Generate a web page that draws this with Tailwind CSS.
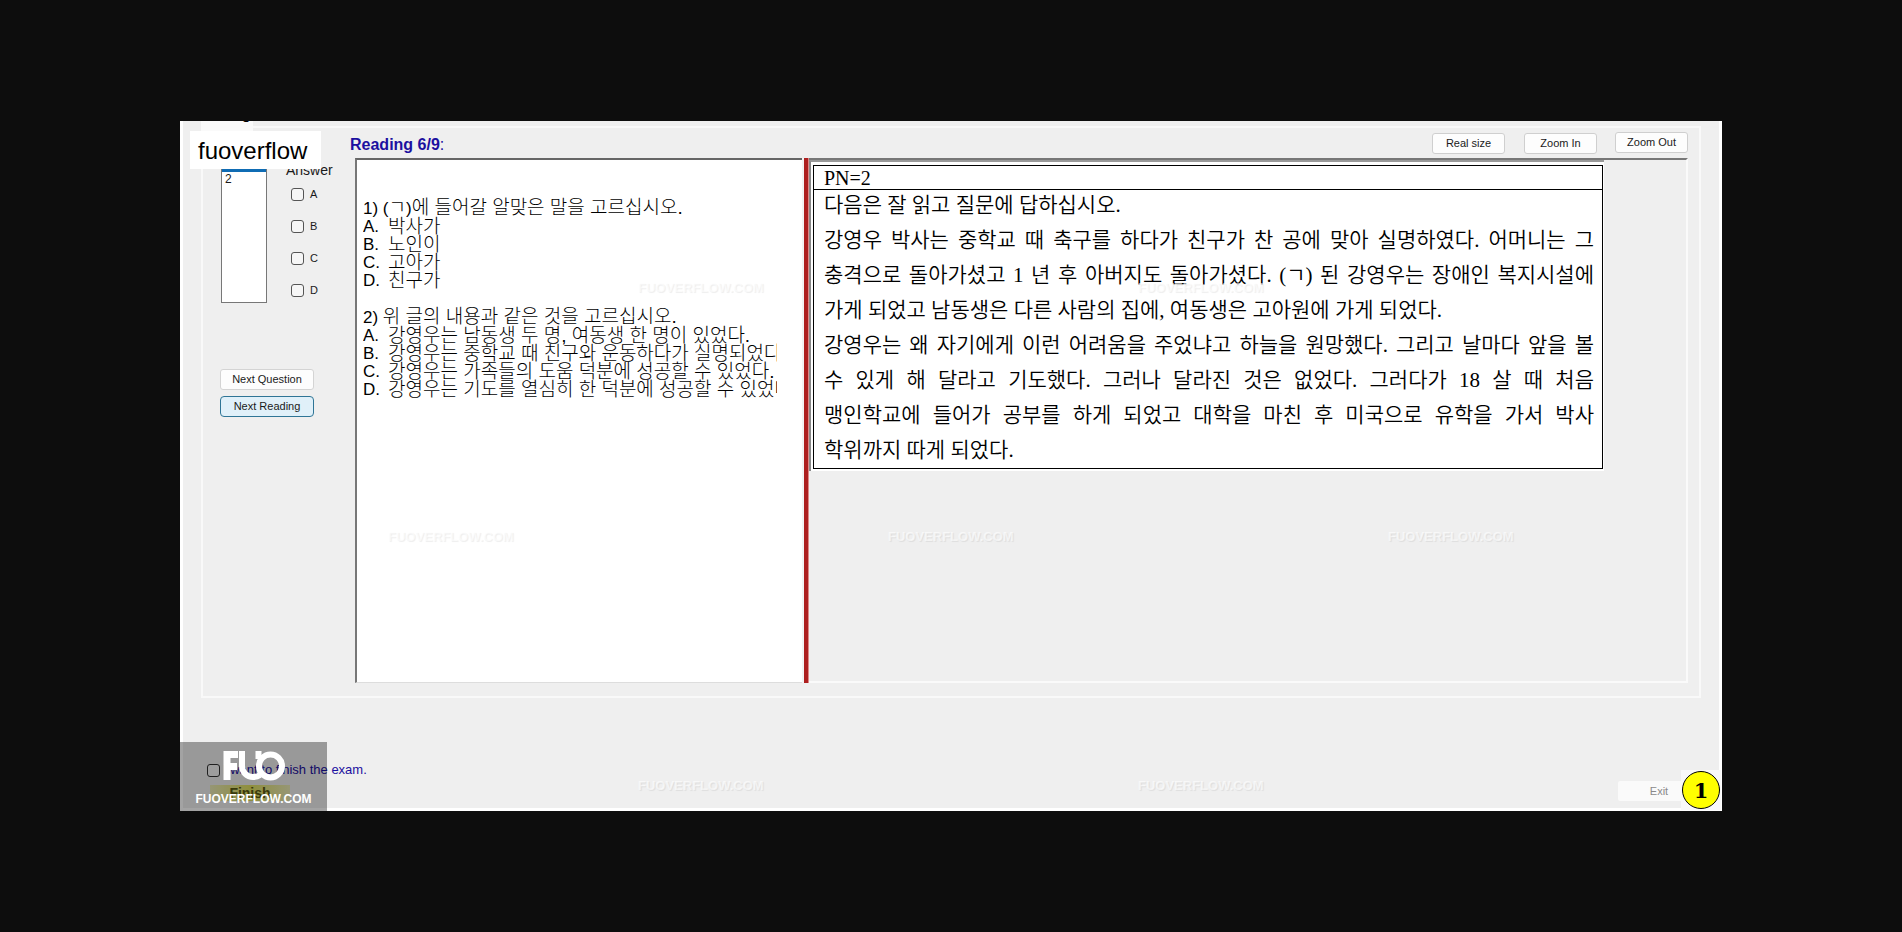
<!DOCTYPE html>
<html lang="ko">
<head>
<meta charset="utf-8">
<meta name="viewport" content="width=device-width, initial-scale=1">
<title>Reading 6/9</title>
<script src="https://cdn.jsdelivr.net/npm/@tailwindcss/browser@4"></script>
</head>
<body class="min-h-screen bg-[#0d0d0d] flex items-center px-[180px] font-['Liberation_Sans','Noto_Sans_CJK_KR',sans-serif] text-[#1a1a1a]">
<main class="relative w-full bg-[#efefef] border-x-[3px] border-b-[3px] border-white">

  <!-- exam group box -->
  <section class="mt-[5px] mx-[18px] border-2 border-[#f9f9f9] flex pr-[11px] pb-[13px]">
    <aside class="w-[147px] shrink-0 pl-[18px]">
      <div class="flex gap-[19px] pt-[34px]">
        <select size="7" aria-label="Question" class="w-[46px] h-[141px] appearance-none bg-none border border-[#777] bg-white text-[12px] overflow-hidden rounded-none p-0 outline-none">
          <option class="h-[9px] min-h-0 px-[3px] py-0 bg-[#0f6cb4] text-white leading-[9px]" label=" "></option>
          <option class="px-[3px] py-0 leading-[16px] min-h-0">2</option>
        </select>
        <fieldset class="flex flex-col">
          <legend class="text-[14px] leading-[16px] mb-[8px]">Answer</legend>
          <div class="flex flex-col gap-[16px] pl-[5px] text-[11px] leading-[16px]">
            <label class="flex items-center gap-[6px]"><input type="checkbox" class="appearance-none size-[13px] border border-[#555] rounded-[3px] bg-[#f6f6f6]">A</label>
            <label class="flex items-center gap-[6px]"><input type="checkbox" class="appearance-none size-[13px] border border-[#555] rounded-[3px] bg-[#f6f6f6]">B</label>
            <label class="flex items-center gap-[6px]"><input type="checkbox" class="appearance-none size-[13px] border border-[#555] rounded-[3px] bg-[#f6f6f6]">C</label>
            <label class="flex items-center gap-[6px]"><input type="checkbox" class="appearance-none size-[13px] border border-[#555] rounded-[3px] bg-[#f6f6f6]">D</label>
          </div>
        </fieldset>
      </div>
      <div class="flex flex-col gap-[6px] pt-[66px] w-[94px] -ml-px text-[11px]">
        <button class="h-[21px] bg-[#fdfdfd] border border-[#d4d4d4] rounded-[3px]">Next Question</button>
        <button class="h-[21px] bg-[#e0f0f9] border border-[#2f7596] rounded-[4px]">Next Reading</button>
      </div>
    </aside>

    <div class="flex-1 min-w-0">
      <header class="flex h-[30px] items-start justify-between">
        <h1 class="pt-[8px] text-[16px] leading-[18px] font-bold text-[#1c10a0]">Reading 6/9<span class="font-normal">:</span></h1>
        <div class="flex pt-[4px] text-[11px]">
          <button class="mt-px w-[73px] h-[21px] bg-[#fdfdfd] border border-[#cfcfcf] rounded-[3px]">Real size</button>
          <button class="mt-px ml-[19px] w-[73px] h-[21px] bg-[#fdfdfd] border border-[#cfcfcf] rounded-[3px]">Zoom In</button>
          <button class="ml-[18px] w-[73px] h-[21px] bg-[#fdfdfd] border border-[#cfcfcf] rounded-[3px]">Zoom Out</button>
        </div>
      </header>

      <div class="flex ml-[5px] min-h-[525px]">
        <article class="w-[447px] shrink-0 bg-white border-l-2 border-t-2 border-l-[#777] border-t-[#666] border-b border-b-[#ddd] pt-[35px] pl-[6px] pr-[25px] text-[19px] leading-[18px] font-light text-black">
          <div class="overflow-hidden whitespace-nowrap py-[4px]">
            <p><span class="text-[17px]">1) </span><span class="text-[17px]">(</span>ㄱ<span class="text-[17px]">)</span>에 들어갈 알맞은 말을 고르십시오.</p>
            <p class="flex"><span class="w-[25px] shrink-0 text-[17px]">A.</span>박사가</p>
            <p class="flex"><span class="w-[25px] shrink-0 text-[17px]">B.</span>노인이</p>
            <p class="flex"><span class="w-[25px] shrink-0 text-[17px]">C.</span>고아가</p>
            <p class="flex"><span class="w-[25px] shrink-0 text-[17px]">D.</span>친구가</p>
            <p class="mt-[18px]"><span class="text-[17px]">2) </span>위 글의 내용과 같은 것을 고르십시오.</p>
            <p class="flex"><span class="w-[25px] shrink-0 text-[17px]">A.</span>강영우는 남동생 두 명, 여동생 한 명이 있었다.</p>
            <p class="flex"><span class="w-[25px] shrink-0 text-[17px]">B.</span>강영우는 중학교 때 친구와 운동하다가 실명되었다.</p>
            <p class="flex"><span class="w-[25px] shrink-0 text-[17px]">C.</span>강영우는 가족들의 도움 덕분에 성공할 수 있었다.</p>
            <p class="flex"><span class="w-[25px] shrink-0 text-[17px]">D.</span>강영우는 기도를 열심히 한 덕분에 성공할 수 있었다.</p>
          </div>
        </article>

        <div class="w-[7px] shrink-0 bg-[#ad1f1f] border-l-2 border-r border-l-[#f3f3f3] border-r-[#d88]"></div>

        <div class="flex-1 min-w-0 border-t-2 border-t-[#777] border-r-2 border-r-[#fafafa] border-b-2 border-b-[#fafafa] pr-[82px]">
          <div class="bg-white border-t-2 border-t-[#999] border-l-2 border-l-[#888] pt-[3px] pl-[2px] pr-px pb-[2px]">
            <table class="w-full border-collapse bg-white text-black font-['Liberation_Serif','Noto_Sans_CJK_KR',serif]">
              <tbody>
                <tr><td class="border border-black px-[10px] h-[24px] text-[20px] leading-[22px]">PN=2</td></tr>
                <tr><td class="border border-black pl-[10px] pr-[8px] text-[21px] leading-[35px] font-[350] whitespace-nowrap">
                  <div class="-mt-[2px]">
                  <p>다음은 잘 읽고 질문에 답하십시오.</p>
                  <p class="[text-align-last:justify]">강영우 박사는 중학교 때 축구를 하다가 친구가 찬 공에 맞아 실명하였다. 어머니는 그</p>
                  <p class="[text-align-last:justify]">충격으로 돌아가셨고 1 년 후 아버지도 돌아가셨다. (ㄱ) 된 강영우는 장애인 복지시설에</p>
                  <p>가게 되었고 남동생은 다른 사람의 집에, 여동생은 고아원에 가게 되었다.</p>
                  <p class="[text-align-last:justify]">강영우는 왜 자기에게 이런 어려움을 주었냐고 하늘을 원망했다. 그리고 날마다 앞을 볼</p>
                  <p class="[text-align-last:justify]">수 있게 해 달라고 기도했다. 그러나 달라진 것은 없었다. 그러다가 18 살 때 처음</p>
                  <p class="[text-align-last:justify]">맹인학교에 들어가 공부를 하게 되었고 대학을 마친 후 미국으로 유학을 가서 박사</p>
                  <p>학위까지 따게 되었다.</p>
                  </div>
                </td></tr>
              </tbody>
            </table>
          </div>
        </div>
      </div>
    </div>
  </section>

  <footer class="flex justify-between items-end pt-[63px] pb-[7px] pl-[24px] pr-[19px]">
    <div>
      <label class="flex items-center gap-[3px] text-[13px] leading-[18px] text-[#1c10a0]"><input type="checkbox" class="appearance-none size-[13px] border border-[#333] rounded-[3px] bg-[#f6f6f6]">I want to finish the exam.</label>
      <button class="block ml-[3px] mt-[6px] w-[80px] h-[16px] bg-linear-to-r from-[#e8e880]/50 via-[#e0e060] to-[#e8e880]/50 text-[14px] leading-[16px] font-bold text-[#5a5a10]">Finish</button>
    </div>
    <button disabled class="w-[82px] h-[20px] bg-[#fafafa] text-[11px] text-[#8a8a8a] rounded-[2px]">Exit</button>
  </footer>

  <!-- repeated site watermark -->
  <div aria-hidden="true" class="absolute inset-x-0 top-[157px] pl-[455px] pointer-events-none flex flex-col gap-[229px] text-[13px] leading-[20px] font-bold text-white/60 [text-shadow:1px_1px_1px_rgb(0_0_0/0.07)]">
    <div class="flex"><span class="w-[500px]">FUOVERFLOW.COM</span><span>FUOVERFLOW.COM</span></div>
    <div class="flex -ml-[250px]"><span class="w-[500px]">FUOVERFLOW.COM</span><span class="w-[500px]">FUOVERFLOW.COM</span><span>FUOVERFLOW.COM</span></div>
    <div class="flex"><span class="w-[500px]">FUOVERFLOW.COM</span><span>FUOVERFLOW.COM</span></div>
  </div>

  <!-- site label and logo over the window corners -->
  <div class="absolute left-[18px] top-0 w-[52px] h-[10px] bg-[#fafafa] overflow-hidden"><span class="absolute left-[41px] -top-[15px] text-[14px] leading-[16px] font-bold text-black">g</span></div>
  <div class="absolute left-[7px] top-[10px] w-[131px] h-[38px] bg-white pl-[8px] text-[24px] leading-[40px] text-black">fuoverflow</div>

  <div class="absolute -left-[3px] -bottom-[3px] w-[147px] h-[69px] bg-black/36 flex flex-col items-center justify-between pt-[9px] pb-[3px] text-white">
    <svg viewBox="0 0 62 30" class="w-[62px] h-[30px]" fill="none" stroke="white" role="img" aria-label="FUO">
      <path stroke-width="7" d="M4 29V3.500H15M4 15.500H14"/>
      <path stroke-width="6" d="M19 0V15a11 11 0 0 0 11 11q4 0 7-2M35.500 0V8"/>
      <circle stroke-width="6" cx="47.500" cy="15" r="11.500"/>
    </svg>
    <span class="text-[12px] leading-[18px] font-bold">FUOVERFLOW.COM</span>
  </div>

  <div class="absolute -right-[2px] -bottom-[2px] size-[40px] bg-[#f9f9f9]">
    <div class="size-[38px] m-px rounded-full border border-black bg-[#ffff00] flex items-center justify-center text-[21px] leading-none font-bold text-black font-['DejaVu_Serif',serif]">1</div>
  </div>
</main>
</body>
</html>
